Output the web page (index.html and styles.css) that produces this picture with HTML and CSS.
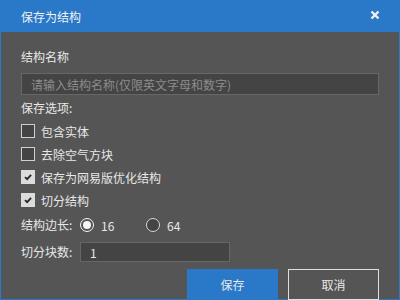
FILE: index.html
```html
<!DOCTYPE html>
<html>
<head>
<meta charset="UTF-8">
<title>保存为结构</title>
<link rel="stylesheet" href="styles.css">
</head>
<body>
<div class="dialog">

<div class="titlebar">
<span class="title">保存为结构</span>
<span class="close"><svg viewBox="0 0 10 10"><path d="M1.5 1.5L8.5 8.5M8.5 1.5L1.5 8.5"/></svg></span>
</div>

<div class="content">
<div class="label name">结构名称</div>
<div class="input wide"><span class="placeholder">请输入结构名称(仅限英文字母和数字)</span></div>

<div class="label options">保存选项:</div>
<div class="checks">
<div class="check"><span class="box"></span>包含实体</div>
<div class="check"><span class="box"></span>去除空气方块</div>
<div class="check on"><span class="box"><svg viewBox="0 0 14 14"><path d="M3.5 7.2L6 9.6L10.6 4.6"/></svg></span>保存为网易版优化结构</div>
<div class="check on"><span class="box"><svg viewBox="0 0 14 14"><path d="M3.5 7.2L6 9.6L10.6 4.6"/></svg></span>切分结构</div>
</div>

<div class="row size">
<span class="label">结构边长:</span>
<span class="radio on"><span class="dot"></span></span><span class="val">16</span>
<span class="radio"></span><span class="val">64</span>
</div>

<div class="row count">
<span class="label">切分块数:</span>
<div class="input short">1</div>
</div>

<div class="buttons">
<div class="btn primary">保存</div>
<div class="btn">取消</div>
</div>
</div>

</div>
</body>
</html>
```

FILE: styles.css
```css
*{
box-sizing: border-box;
margin:0; padding:0;
}

body{
width: 400px; height: 300px;
overflow: hidden;
font-family: "Noto Sans CJK SC", "Liberation Sans", sans-serif;
font-size: 12px;
color: #e8e8e8;
background: #555;
}

.dialog{
width: 400px; height: 300px;
display: flex;
flex-direction: column;
background: #555;
border: 1px solid #2a78c8;
border-top: none;
}

/*---------*/
.titlebar{
height: 32px;
flex: none;
background: #2a78c8;
display: flex;
align-items: center;
justify-content: space-between;
padding: 0 20px 0 21px;
margin: 0 -1px;
}

.title{
font-size: 12px;
color: #f2f2f2;
line-height: 1;
padding-top: 1px;
}

.close{
width: 10px; height: 10px;
display: inline-flex;
margin-top: -2px;
}

.close svg{
width: 100%; height: 100%;
stroke: #f0f0f0;
stroke-width: 2.4;
}

/*---------*/
.content{
flex: 1;
padding: 17px 20px 0 20px;
display: flex;
flex-direction: column;
}

.label{
line-height: 16px;
white-space: nowrap;
}

.input{
height: 22px;
background: #444;
border: 1px solid #676767;
display: flex;
align-items: center;
padding-left: 9px;
}

.input.wide{
margin-top: 8px;
width: 358px;
}

.placeholder{
color: #8c8c8c;
}

.options{
margin-top: 5px;
}

.checks{
margin-top: 8px;
display: flex;
flex-direction: column;
gap: 9px;
}

.check{
display: flex;
align-items: center;
gap: 6px;
height: 14px;
}

.box{
width: 14px; height: 14px;
border: 1px solid #cfcfcf;
background: #444;
display: inline-flex;
}

.check.on .box{
background: #dcdcdc;
border-color: #dcdcdc;
}

.box svg{
width: 100%; height: 100%;
fill: none;
stroke: #2a2a2a;
stroke-width: 2.2;
}

.row{
display: flex;
align-items: center;
}

.size{
margin-top: 11px;
height: 14px;
}

.size .label{
width: 59px;
}

.radio{
width: 14px; height: 14px;
border-radius: 50%;
border: 1px solid #d6d6d6;
background: #444;
display: inline-flex;
align-items: center;
justify-content: center;
}

.radio.on{
background: #555;
border: 1.5px solid #f5f5f5;
}

.radio .dot{
width: 8px; height: 8px;
border-radius: 50%;
background: #f5f5f5;
}

.val{
margin-left: 7px;
width: 45px;
}

.count{
margin-top: 10px;
}

.count .label{
width: 59px;
}

.input.short{
width: 150px;
height: 20px;
padding-left: 9px;
}

.buttons{
margin-top: 7px;
display: flex;
justify-content: flex-end;
gap: 10px;
}

.btn{
width: 91px;
height: 31px;
display: flex;
align-items: center;
justify-content: center;
border: 1px solid #e0e0e0;
font-size: 12px;
}

.btn.primary{
background: #2a78c8;
border-color: #2a78c8;
}
```
